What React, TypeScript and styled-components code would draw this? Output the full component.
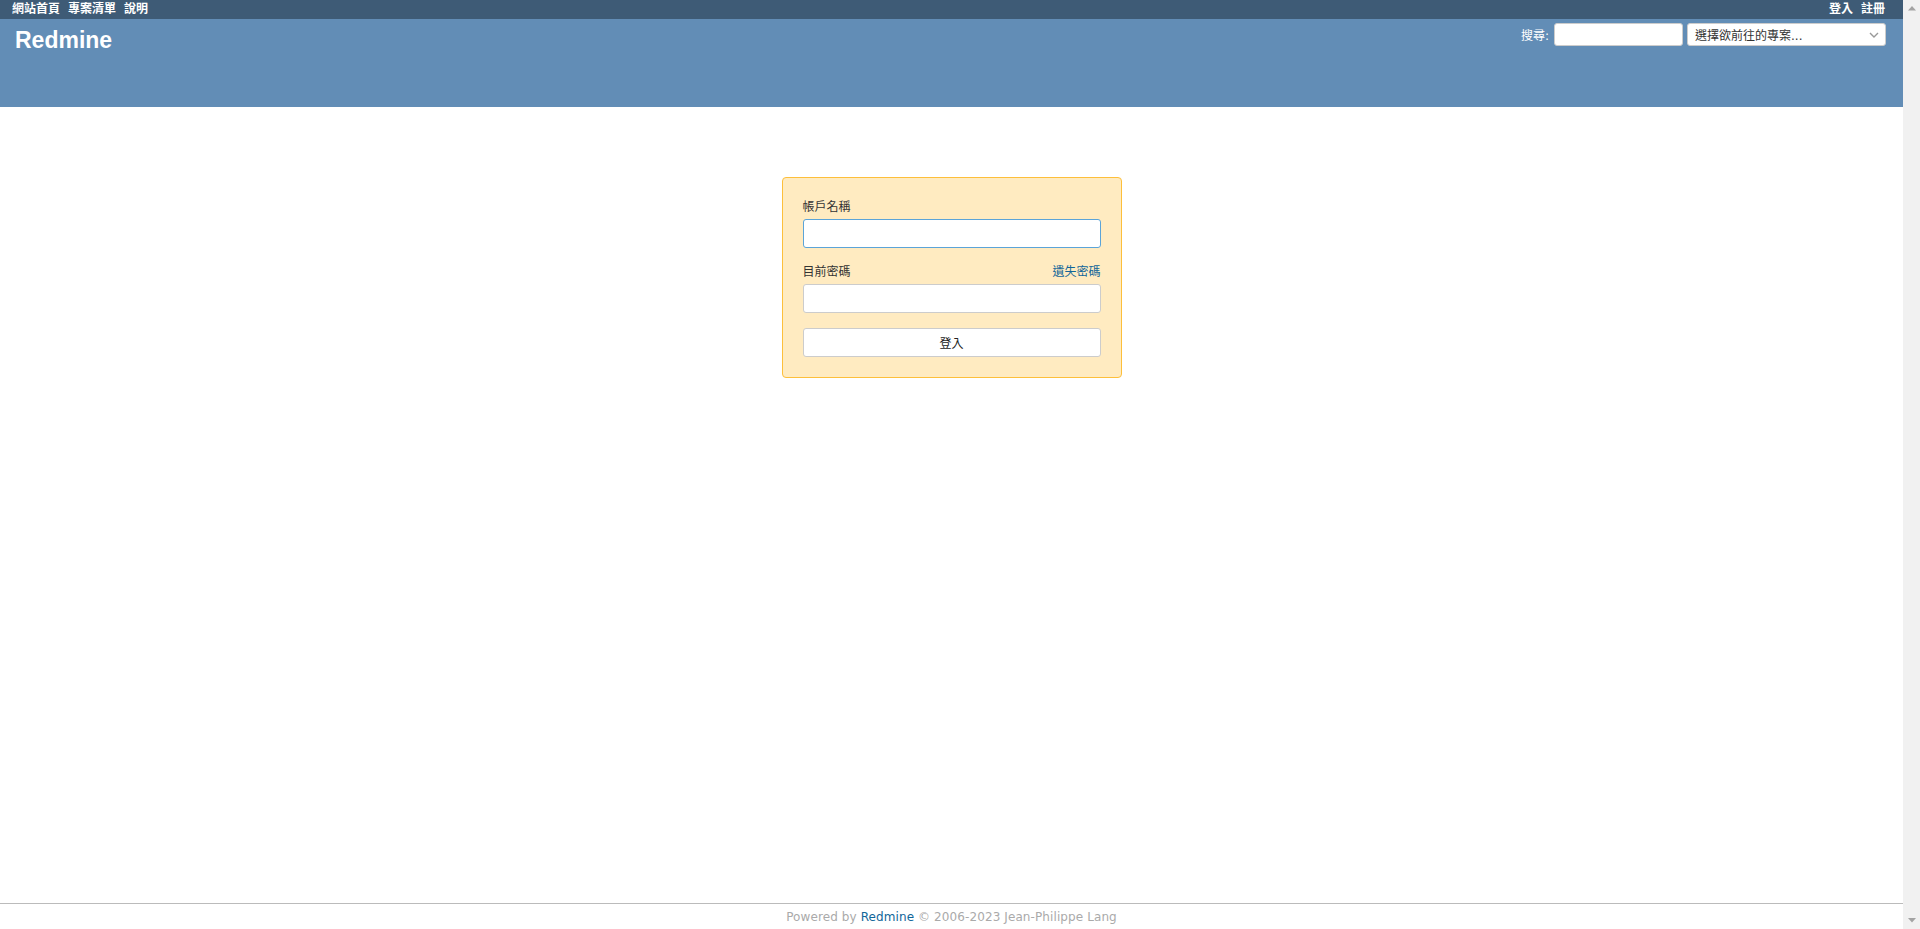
import React from "react";
import styled, { createGlobalStyle } from "styled-components";

const GlobalStyle = createGlobalStyle`
    body {
        margin: 0;
        overflow: hidden;
        font-family: "DejaVu Sans", "Noto Sans CJK TC", sans-serif;
        font-size: 12px;
        color: #333;
        background: #fff;
    }
    a {
        color: #169;
        text-decoration: none;
    }
`

const Viewport = styled.div`
    display: flex;
    height: 100vh;
`

const Wrapper = styled.div`
    flex: 1;
    min-width: 0;
    display: flex;
    flex-direction: column;
    overflow: hidden;
`

// the browser's own scroll rail, as seen in the screenshot
const ScrollRail = styled.div`
    width: 17px;
    flex-shrink: 0;
    display: flex;
    flex-direction: column;
    justify-content: space-between;
    align-items: center;
    padding: 6px 0;
    box-sizing: border-box;
    background: #f1f1f1;
`

const TopMenu = styled.div`
    display: flex;
    justify-content: space-between;
    align-items: center;
    height: 19px;
    padding: 0 18px 0 12px;
    background: #3e5b76;
`

const MenuList = styled.ul`
    display: flex;
    gap: 8px;
    margin: 0;
    padding: 0;
    list-style: none;
`

const MenuLink = styled.a`
    color: #fff;
    font-weight: bold;
    font-size: 12px;
    line-height: 19px;
`

const Header = styled.div`
    display: flex;
    justify-content: space-between;
    align-items: flex-start;
    height: 88px;
    box-sizing: border-box;
    padding: 4px 17px 0 15px;
    background: #628db6;
    color: #fff;
`

const Title = styled.h1`
    margin: 4px 0 0;
    font-family: "Liberation Sans", Arial, sans-serif;
    font-size: 23px;
    line-height: 27px;
    font-weight: bold;
    color: #fff;
`

const QuickSearch = styled.form`
    display: flex;
    align-items: center;
    gap: 4px;
    margin: 0;
`

const SearchLabel = styled.label`
    margin-right: 1px;
    color: #fff;
    font-size: 12px;
`

const SearchInput = styled.input`
    width: 129px;
    height: 23px;
    box-sizing: border-box;
    border: 1px solid #ccc;
    border-radius: 3px;
    background: #fff;
    padding: 2px 4px;
`

const JumpBox = styled.div`
    display: flex;
    align-items: center;
    justify-content: space-between;
    width: 199px;
    height: 23px;
    box-sizing: border-box;
    padding: 0 6px 0 7px;
    border: 1px solid #ccc;
    border-radius: 3px;
    background: #fff;
    color: #333;
    font-size: 12px;
    cursor: pointer;
`

const Main = styled.div`
    flex: 1;
`

const LoginForm = styled.form`
    width: 340px;
    box-sizing: border-box;
    margin: 70px auto 0;
    padding: 20px;
    border: 1px solid #fdbf3b;
    border-radius: 4px;
    background: #ffebc1;
`

const Label = styled.label`
    display: block;
    padding-top: 1px;
    margin-bottom: 4px;
    line-height: 16px;
    color: #333;
`

const LabelRow = styled.div`
    display: flex;
    justify-content: space-between;
    align-items: center;
    padding-top: 1px;
    margin-bottom: 4px;
    line-height: 16px;

    ${Label} {
        padding-top: 0;
        margin-bottom: 0;
    }
`

const Field = styled.input<{ $focused?: boolean }>`
    display: block;
    width: 100%;
    height: 29px;
    box-sizing: border-box;
    margin: 0 0 15px;
    padding: 2px;
    border: 1px solid ${p => p.$focused ? '#5ba4d8' : '#ccc'};
    border-radius: 3px;
    background: #fff;
    outline: none;
`

const Submit = styled.button`
    display: block;
    width: 100%;
    height: 29px;
    box-sizing: border-box;
    border: 1px solid #ccc;
    border-radius: 3px;
    background: #fff;
    color: #222;
    font-family: inherit;
    font-size: 12px;
    cursor: pointer;
`

const Footer = styled.div`
    border-top: 1px solid #bbb;
    padding: 6px 0 5px;
    line-height: 14px;
    text-align: center;
    color: #aaa;
    font-size: 12px;
    letter-spacing: 0.1px;
`

const Arrow = ({ down }: { down?: boolean }) => (
    <svg width="8" height="5" viewBox="0 0 8 5">
        <polygon points={down ? "0,0 8,0 4,4.5" : "0,4.5 8,4.5 4,0"} fill="#a3a3a3" />
    </svg>
)

export default function App() {
    return (
        <>
            <GlobalStyle />
            <Viewport>
                <Wrapper>
                    <TopMenu>
                        <MenuList>
                            <li><MenuLink href="#">網站首頁</MenuLink></li>
                            <li><MenuLink href="#">專案清單</MenuLink></li>
                            <li><MenuLink href="#">說明</MenuLink></li>
                        </MenuList>
                        <MenuList>
                            <li><MenuLink href="#">登入</MenuLink></li>
                            <li><MenuLink href="#">註冊</MenuLink></li>
                        </MenuList>
                    </TopMenu>
                    <Header>
                        <Title>Redmine</Title>
                        <QuickSearch onSubmit={e => e.preventDefault()}>
                            <SearchLabel htmlFor="q">搜尋:</SearchLabel>
                            <SearchInput id="q" type="text" />
                            <JumpBox>
                                <span>選擇欲前往的專案...</span>
                                <svg width="10" height="6" viewBox="0 0 10 6">
                                    <polyline points="1,1 5,5 9,1" fill="none" stroke="#999" strokeWidth="1.4" />
                                </svg>
                            </JumpBox>
                        </QuickSearch>
                    </Header>
                    <Main>
                        <LoginForm onSubmit={e => e.preventDefault()}>
                            <Label htmlFor="username">帳戶名稱</Label>
                            <Field id="username" type="text" $focused />
                            <LabelRow>
                                <Label htmlFor="password">目前密碼</Label>
                                <a href="#">遺失密碼</a>
                            </LabelRow>
                            <Field id="password" type="password" />
                            <Submit type="submit">登入</Submit>
                        </LoginForm>
                    </Main>
                    <Footer>
                        Powered by <a href="#">Redmine</a> © 2006-2023 Jean-Philippe Lang
                    </Footer>
                </Wrapper>
                <ScrollRail>
                    <Arrow />
                    <Arrow down />
                </ScrollRail>
            </Viewport>
        </>
    )
}
